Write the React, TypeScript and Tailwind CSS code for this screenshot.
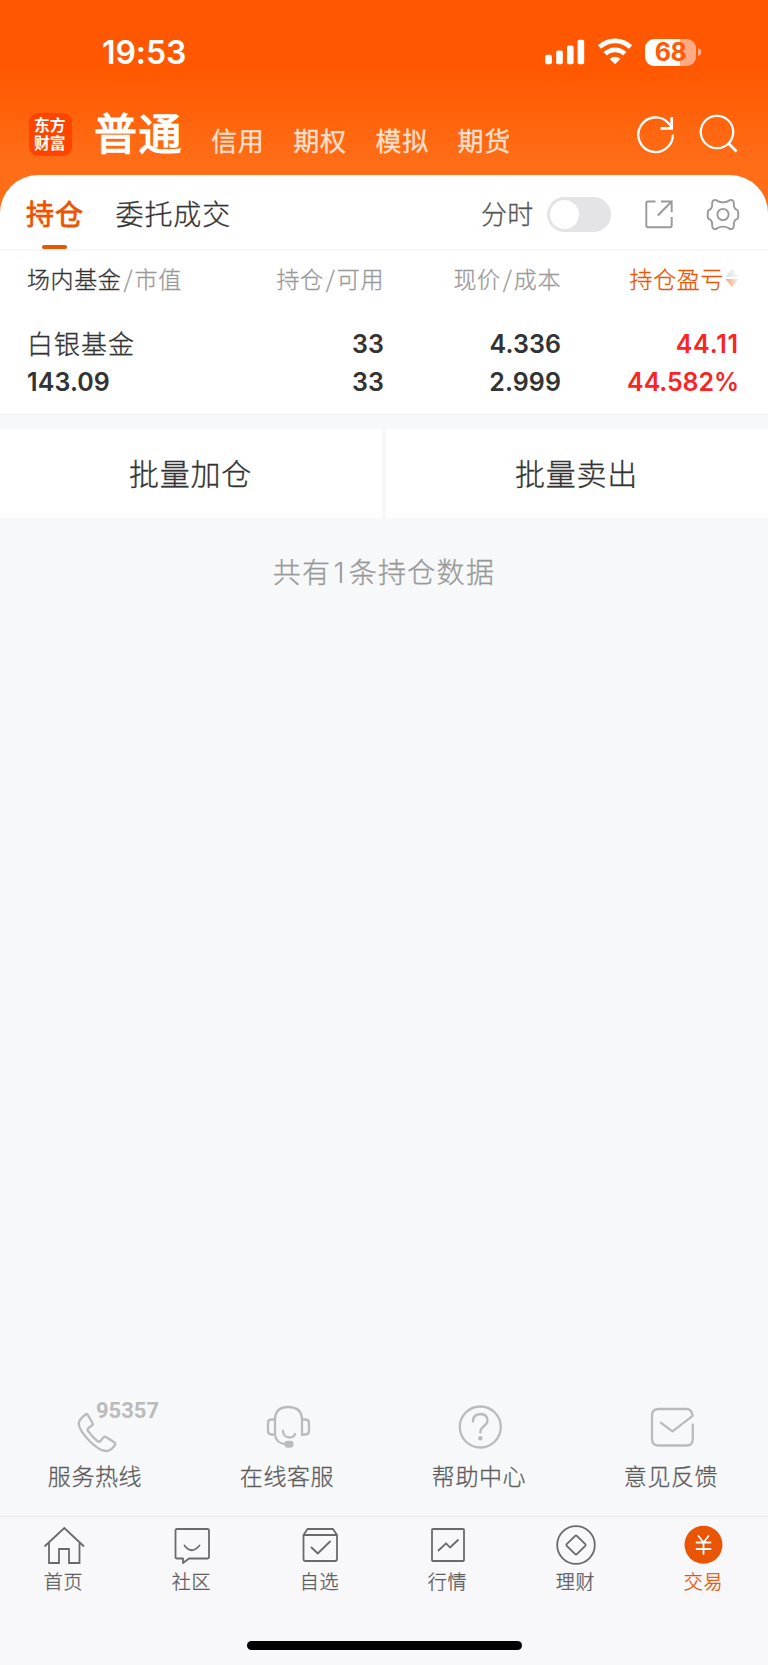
import type { ReactNode } from "react";

const cjk = "font-['Noto_Sans_CJK_SC',sans-serif]";
const num = "font-['Inter','Noto_Sans_CJK_SC',sans-serif]";
const book = "font-light [-webkit-text-stroke:0.3px]";

function StatusBar() {
  return (
    <div className="flex h-[104px] items-start justify-between pl-[102px] pr-[66px]">
      <span className={`${num} mt-[33px] text-[32px] font-semibold leading-[40px] tracking-[-0.1px] text-white`}>19:53</span>
      <div className="mt-[38px] flex items-center">
        <svg width="40" height="28" viewBox="0 0 40 28" fill="#fff">
          <rect x="0.3" y="16.8" width="6.6" height="9.4" rx="1.8" />
          <rect x="11.2" y="12.4" width="6.6" height="13.8" rx="1.8" />
          <rect x="22" y="7.4" width="6.6" height="18.8" rx="1.8" />
          <rect x="32.6" y="1.7" width="6.6" height="24.5" rx="1.8" />
        </svg>
        <svg className="ml-[12px]" width="36" height="28" viewBox="0 0 36 28" fill="none" stroke="#fff" strokeWidth="4.8">
          <path d="M2.4 9.1a22.6 22.6 0 0 1 31.200 0" />
          <path d="M8.200 15.800a14 14 0 0 1 19.600 0" />
          <path d="M18 26.200l-5.300-5.300a7.700 7.700 0 0 1 10.600 0z" fill="#fff" stroke="none" />
        </svg>
        <div className="ml-[12px] flex h-[27px] w-[51px] items-center justify-center rounded-[9px] bg-[linear-gradient(90deg,#fff_68%,#ffac84_68%)]">
          <span className={`${num} text-[25px] font-bold leading-none tracking-[-0.5px] text-[#ff5a05]`}>68</span>
        </div>
        <svg className="ml-[2px]" width="4" height="10" viewBox="0 0 4 10">
          <path d="M0 1q3.400 1.200 3.400 4T0 9z" fill="#ffac84" />
        </svg>
      </div>
    </div>
  );
}

function AccountBar() {
  return (
    <div className="flex h-[71px] items-start pl-[29px]">
      <div className="mt-[9px] flex h-[43px] w-[43px] items-center justify-center rounded-[9px] bg-[#ff4400] pb-[2px] pr-[1px]">
        <span className={`${cjk} w-[32px] break-all text-[15.8px] font-bold leading-[18px] text-white`}>东方财富</span>
      </div>
      <h1 className={`${cjk} ml-[22px] mt-[2px] w-[117px] whitespace-nowrap text-[43px] leading-[50px] tracking-[1.600px] text-white [-webkit-text-stroke:1.4px_#fff]`}>普通</h1>
      {["信用", "期权", "模拟", "期货"].map((t) => (
        <span key={t} className={`${cjk} mt-[16px] w-[82.2px] whitespace-nowrap text-[26px] leading-[40px] tracking-[0.8px] text-[#ffe0cd] [-webkit-text-stroke:0.3px_#ffe0cd]`}>{t}</span>
      ))}
      <svg className="ml-[97px] mt-[10px]" width="40" height="40" viewBox="0 0 40 40" fill="none" stroke="#fff" strokeWidth="2.3">
        <path d="M35.900 20.500A17.300 17.300 0 1 1 31.500 9.200l3 3.600" />
        <path d="M34.700 3v11.300H23.500" strokeWidth="2.7" />
      </svg>
      <svg className="ml-[22px] mt-[10px]" width="40" height="40" viewBox="0 0 40 40" fill="none" stroke="#fff" strokeWidth="2.3">
        <circle cx="18" cy="18" r="16.200" />
        <path d="M29.300 29.300l8.300 8.200" strokeWidth="2.800" />
      </svg>
    </div>
  );
}

function Tabs() {
  return (
    <div className={`${cjk} flex h-[76px] border-b-2 border-[#f7f7f8] pl-[26px] text-[28px] tracking-[0.9px]`}>
      <div className="flex w-[89.5px] flex-col">
        <span className="mt-[18px] leading-[40px] text-[#ea5504] [-webkit-text-stroke:0.8px_#ea5504]">持仓</span>
        <span className="ml-[16px] mt-[12px] h-[5px] w-[25px] rounded-[2px] bg-[#ea5504]" />
      </div>
      <span className={`${book} mt-[18px] w-[365.5px] leading-[40px] text-[#333]`}>委托成交</span>
      <span className={`${book} mt-[18px] w-[65.5px] text-[26px] leading-[40px] tracking-[0.3px] text-[#555]`}>分时</span>
      <div className="mt-[22px] h-[35px] w-[64px] rounded-full bg-[#e4e4e6] p-[3px]">
        <div className="h-[29px] w-[29px] rounded-full bg-white" />
      </div>
      <svg className="ml-[33px] mt-[24px]" width="30" height="30" viewBox="0 0 30 30" fill="none" stroke="#999" strokeWidth="1.9">
        <path d="M11.500 2.500H4Q2.300 2.500 2.300 4.200V26.500Q2.300 28.200 4 28.200H26Q27.700 28.200 27.700 26.500V18" />
        <path d="M17 2.500H27.700V13.300M27.700 2.500L13.800 16.500" />
      </svg>
      <svg className="ml-[32px] mt-[22px]" width="34" height="35" viewBox="-17 -17.500 34 35" fill="none" stroke="#999" strokeWidth="1.9" strokeLinejoin="round">
        <path d="M-9.500 -14.200Q-7.500 -15.300 -5.800 -13.700Q0 -10.500 5.800 -13.700Q7.500 -15.300 9.500 -14.200Q10.900 -13.300 10.800 -11Q10.600 -5.500 14 -4.700Q15.400 -4 15.300 0Q15.400 4 14 4.700Q10.600 5.500 10.800 11Q10.900 13.300 9.500 14.200Q7.500 15.300 5.800 13.700Q0 10.500 -5.800 13.700Q-7.500 15.300 -9.500 14.200Q-10.900 13.300 -10.800 11Q-10.600 5.500 -14 4.700Q-15.400 4 -15.300 0Q-15.400 -4 -14 -4.700Q-10.600 -5.500 -10.800 -11Q-10.900 -13.300 -9.500 -14.200Z" />
        <circle r="5.600" />
      </svg>
    </div>
  );
}

function Holdings() {
  const grid = "grid grid-cols-[180px_177px_177px_178px] pl-[27px]";
  return (
    <div className="h-[163px]">
      <div className={`${cjk} ${grid} ${book} pt-[7px] text-right text-[23px] leading-[40px] tracking-[0.6px] text-[#999]`}>
        <span className="whitespace-nowrap text-left"><span className="text-[#333]">场内基金</span><span className="ml-[2px] mr-[1.5px]">/</span>市值</span>
        <span>持仓<span className="ml-[2px] mr-[1.5px]">/</span>可用</span>
        <span>现价<span className="ml-[2px] mr-[1.5px]">/</span>成本</span>
        <span className="flex items-center justify-end text-[#ea5504]">
          持仓盈亏
          <svg className="ml-px" width="14" height="20" viewBox="0 0 14 20">
            <defs>
              <linearGradient id="up" x1="0" y1="0" x2="1" y2="0"><stop offset="0" stopColor="#dddddf" /><stop offset="1" stopColor="#fafafa" /></linearGradient>
              <linearGradient id="down" x1="0" y1="0" x2="1" y2="0"><stop offset="0" stopColor="#f5a478" /><stop offset="1" stopColor="#fdeee6" /></linearGradient>
            </defs>
            <path d="M7 1l6.500 8H.500z" fill="url(#up)" />
            <path d="M7 19l6.500-8H.500z" fill="url(#down)" />
          </svg>
        </span>
      </div>
      <div className={`${num} ${grid} mt-[27px] text-right text-[25px] font-semibold leading-[38px] tracking-[0.1px] text-[#333]`}>
        <span className={`${cjk} ${book} -mt-[1px] text-left text-[26px] tracking-[1px]`}>白银基金</span>
        <span>33</span>
        <span>4.336</span>
        <span className="tracking-[0.8px] text-[#fa2424]">44.11</span>
        <span className="text-left">143.09</span>
        <span>33</span>
        <span>2.999</span>
        <span className="tracking-[-0.1px] text-[#fa2424]">44.582%</span>
      </div>
    </div>
  );
}

const gray = { fill: "none", stroke: "#bbb", strokeWidth: 2.3, strokeLinecap: "round", strokeLinejoin: "round" } as const;
const dark = { fill: "none", stroke: "#6a6a6a", strokeWidth: 1.8, strokeLinecap: "round", strokeLinejoin: "round" } as const;

function Service({ label, children }: { label: string; children: ReactNode }) {
  return (
    <div className="flex w-[192px] flex-col items-center">
      <div className="relative h-[55px] w-[48px]">{children}</div>
      <span className={`${cjk} ${book} mr-[2px] text-[23px] leading-[40px] tracking-[0.600px] text-[#5c5c5c]`}>{label}</span>
    </div>
  );
}

function Services() {
  return (
    <div className="flex h-[116px]">
      <Service label="服务热线">
        <svg width="48" height="56" viewBox="0 0 48 56" {...gray}>
          <path d="M13.500 14.500Q14.500 13.500 15.500 14.500L20.500 23Q21.300 24.300 20 25.300L16 28.500Q15 29.500 15.800 30.700Q20.500 37.500 26 41.500Q27.500 42.300 28.500 41L31.500 37.500Q32.500 36.300 34 37L42.500 42.500Q44 43.500 43 44.800Q39.500 50.500 34.500 51Q28 51.500 17.500 41Q7 30 6.700 23.500Q7 19.500 13.500 14.500Z" />
        </svg>
        <span className="absolute left-[24px] top-[1px] font-['Roboto',sans-serif] text-[22px] font-bold leading-[20px] text-[#bbb]">95357</span>
      </Service>
      <Service label="在线客服">
        <svg width="48" height="56" viewBox="0 0 48 56" {...gray}>
          <path d="M11 35V20Q11 7 24 7Q38 7 38 20V35" />
          <path d="M11 19.500H7.500Q4 19.500 4 23V31Q4 34.500 7.500 34.500H11M38 19.500H41.500Q45 19.500 45 23V31Q45 34.500 41.500 34.500H38M11 34.500Q12 44 22 44" />
          <path d="M19 31Q19.500 37 25 37.500Q30 37.500 31 34" />
          <rect x="21.500" y="42" width="7" height="4.500" rx="2.200" fill="#bbb" />
        </svg>
      </Service>
      <Service label="帮助中心">
        <svg width="48" height="56" viewBox="0 0 48 56" {...gray}>
          <circle cx="24.300" cy="27" r="20.500" />
          <path d="M17 21.500Q17 14.200 24.500 14Q31.500 14.200 31.500 20.500Q31.500 23.500 28 26Q24.300 29 24.300 32.500" />
          <circle cx="24.300" cy="38.200" r="1.500" fill="#bbb" strokeWidth="1.500" />
        </svg>
      </Service>
      <Service label="意见反馈">
        <svg width="48" height="56" viewBox="0 0 48 56" {...gray}>
          <path d="M44.800 24.500V39Q44.800 45.500 38.500 45.500H10.500Q4 45.500 4 39V15.500Q4 9 10.500 9H38.500Q43.800 9 44.600 15.800L24.500 31.300L13 22.800" />
        </svg>
      </Service>
    </div>
  );
}

function NavItem({ label, active, children }: { label: string; active?: boolean; children: ReactNode }) {
  return (
    <div className={`flex w-[128px] flex-col items-center ${active ? "text-[#ea5504]" : "text-[#5c5c5c]"}`}>
      <svg width="42" height="42" viewBox="0 0 42 42" {...dark}>{children}</svg>
      <span className={`${cjk} ${book} mr-[1px] text-[19px] leading-[30px] tracking-[0.800px]`}>{label}</span>
    </div>
  );
}

function BottomNav() {
  return (
    <nav className="flex h-[149px] flex-col items-center border-t border-[#e8e8ea] bg-[#f8f8fb]">
      <div className="flex h-[124px] w-full pt-[7px]">
        <NavItem label="首页">
          <path d="M2 22L21.300 4L40.500 22M6 19V39H16V25H26V39H36.500V19" strokeLinejoin="miter" />
        </NavItem>
        <NavItem label="社区">
          <path d="M6 5H36.500Q38 5 38 6.500V33Q38 34.500 36.500 34.500H18L12 39V34.500H6Q4.500 34.500 4.500 33V6.500Q4.500 5 6 5Z" />
          <path d="M13.500 21.500Q20.500 31 28.500 21.500" />
        </NavItem>
        <NavItem label="自选">
          <path d="M4.500 11L8.500 5H34L38 11V35Q38 37 36 37H6.500Q4.500 37 4.500 35ZM4.500 11H38M12.500 23.500L18.800 29.500L31 17.500" />
        </NavItem>
        <NavItem label="行情">
          <rect x="5" y="5" width="32" height="32" rx="1" />
          <path d="M11.500 26.500L19 19.300L23 23.500L31 16" />
        </NavItem>
        <NavItem label="理财">
          <circle cx="21" cy="21" r="18.800" />
          <path d="M20.200 11.800Q21 11 21.800 11.800L30.300 20.200Q31 21 30.300 21.800L21.800 30.200Q21 31 20.200 30.200L11.700 21.800Q11 21 11.700 20.200Z" />
        </NavItem>
        <NavItem label="交易" active>
          <circle cx="20.500" cy="20.800" r="19" fill="#ea5504" stroke="none" />
          <path d="M15.500 12L20.500 18.500L25.500 12M20.500 18.500V30M13.500 18.500H27.500M13.500 25H27.500" stroke="#fff" strokeWidth="1.800" />
        </NavItem>
      </div>
      <div className="h-[9px] w-[275px] rounded-full bg-black" />
    </nav>
  );
}

export default function App() {
  return (
    <div className="flex h-[1665px] w-[768px] flex-col overflow-hidden bg-[#f7f8fa]">
      <div className="bg-[linear-gradient(180deg,#ff5800_0px,#ff5800_70px,#ff6d17_160px,#ff6d17_215px)]">
        <StatusBar />
        <AccountBar />
        <main className="rounded-t-[38px] bg-white">
          <Tabs />
          <Holdings />
        </main>
      </div>
      <div className={`${cjk} ${book} flex gap-[4px] border-t border-[#efeff0] pt-[14px] text-[30px] tracking-[0.700px] text-[#333]`}>
        <button className="h-[89px] w-[382px] bg-white pb-[3px] pr-px">批量加仓</button>
        <button className="h-[89px] w-[382px] bg-white pb-[3px] pr-px">批量卖出</button>
      </div>
      <p className={`${cjk} ${book} mt-[33px] text-center text-[28px] leading-[40px] tracking-[1.300px] text-[#999]`}>共有<span className="ml-[2px] mr-[3px] font-['Inter',sans-serif] [-webkit-text-stroke:0]">1</span>条持仓数据</p>
      <div className="mt-auto">
        <Services />
        <BottomNav />
      </div>
    </div>
  );
}
